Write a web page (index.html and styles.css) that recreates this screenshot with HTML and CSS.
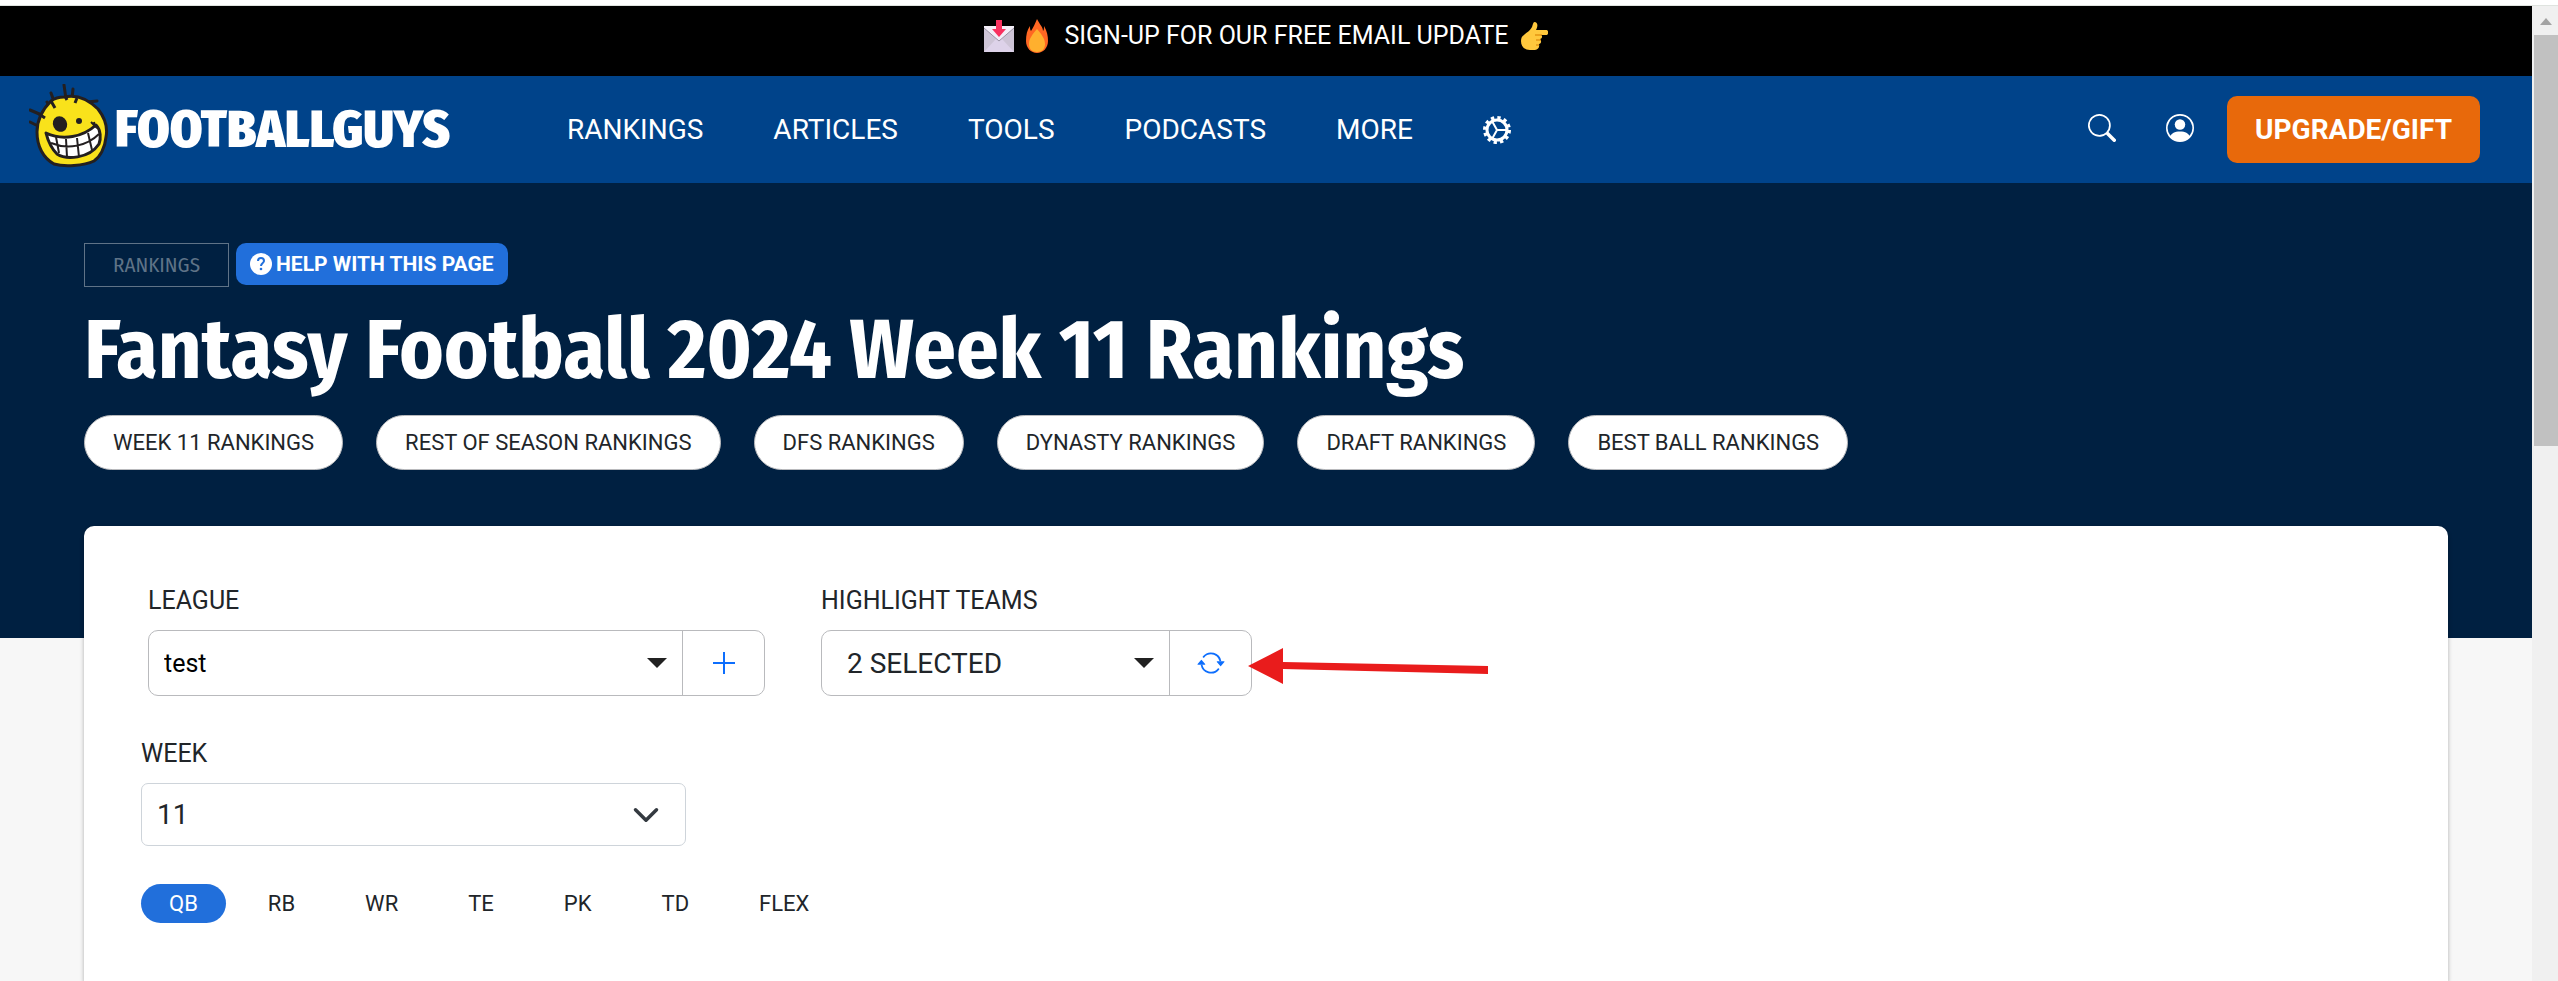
FILE: index.html
```
<!DOCTYPE html>
<html lang="en">
<head>
    <meta charset="UTF-8">
    <meta name="viewport" content="width=device-width, initial-scale=1.0">
    <title>Fantasy Football 2024 Week 11 Rankings</title>
    <link rel="stylesheet" href="styles.css">
</head>
<body>
    <div class="window-edge"></div>
    <div class="window">
        <div class="page">
            <a class="announcement" href="#">
                <svg width="30" height="32" viewBox="0 0 30 32" aria-hidden="true">
                    <rect x="0" y="6" width="30" height="26" fill="#e1d8ec"/>
                    <path d="M0 32 L12 19 H18 L30 32Z" fill="#ddd2e9"/>
                    <path d="M0 6 V32 L12 19Z M30 6 V32 L18 19Z" fill="#cdc4d6"/>
                    <path d="M0 6 H30 V8 L15 21 L0 8Z" fill="#f3eef8"/>
                    <path d="M0 8 L15 21 L30 8" fill="none" stroke="#9b93a4" stroke-width="1"/>
                    <path d="M12 0 H18 V9 H22 L15 17 L8 9 H12Z" fill="#f8315f"/>
                </svg>
                <svg class="flame" width="22" height="34" viewBox="0 0 22 34" aria-hidden="true">
                    <path d="M11 0 C14 6 17 8 17 12 C18 11 18 9 18 7 C21 12 22 17 22 22 C22 29 17 34 11 34 C5 34 0 29 0 22 C0 16 1 11 4 7 C4 9 4 11 5 12 C7 9 9 5 11 0Z" fill="#ff6723"/>
                    <path d="M11 10 C15 15 19 19 19 25 C19 30 16 33 11 33 C6 33 3 30 3 25 C3 19 7 15 11 10Z" fill="#ffb02e"/>
                </svg>
                <span>SIGN-UP FOR OUR FREE EMAIL UPDATE</span>
                <svg width="27" height="28" viewBox="0 0 27 28" aria-hidden="true">
                    <path d="M3 13 C6 10 9 9 11 5 C12 2 12 0 14 0 C17 1 17 4 15 8 H25 C28 8 28 13 25 13 H20 C22 14 21 17 19 17 C21 19 20 22 18 22 C19 25 17 28 14 28 H9 C3 28 0 24 0 19 C0 16 1 14 3 13Z" fill="#ffc83d"/>
                    <path d="M14 13 H21 M15 18 H20 M15 23 H18" stroke="#d67d00" stroke-width="1" fill="none"/>
                </svg>
            </a>

            <header class="navbar">
                <a class="logo" href="#">
                    <svg width="80" height="84" viewBox="0 0 80 84" aria-hidden="true">
                        <g fill="none" stroke="#231f20" stroke-width="3" stroke-linecap="round">
                            <path d="M1 26 L15 32 M1 38 L9 42 M22 9 L26 20 M35 1 L37 15 M44 5 L43 15 M68 17 L58 18 M18 18 L22 25 M51 15 L48 19"/>
                        </g>
                        <path d="M35 13 C48 10 60 16 69 25 C76 34 79 43 77 53 C76 64 71 73 65 77 C55 82 35 83 25 80 C14 74 8 62 8 48 C8 36 14 25 22 17 C26 14 30 13 35 13Z" fill="#f9e21b" stroke="#231f20" stroke-width="3"/>
                        <path d="M22 17 L26 24 M36 12 L38 16 M48 14 L46 19 M10 30 L16 34" stroke="#231f20" stroke-width="3"/>
                        <ellipse cx="31" cy="40" rx="7" ry="8" transform="rotate(-25 31 40)" fill="#231f20"/>
                        <circle cx="50" cy="37" r="3" fill="#231f20"/>
                        <path d="M17 49 C34 57 54 53 67 41 C72 46 72 55 70 60 C60 75 37 76 28 70 C22 64 19 57 17 49Z" fill="#fff" stroke="#231f20" stroke-width="3" stroke-linejoin="round"/>
                        <path d="M22 59 C39 66 58 62 70 50 M27 53 L30 69 M37 55 L38 73 M48 54 L50 73 M59 49 L63 66 M62 38 L66 42 L65 38" fill="none" stroke="#231f20" stroke-width="2"/>
                    </svg>
                    <span class="logo-text">FOOTBALLGUYS</span>
                </a>
                <nav class="main-nav">
                    <a href="#">RANKINGS</a>
                    <a href="#">ARTICLES</a>
                    <a href="#">TOOLS</a>
                    <a href="#">PODCASTS</a>
                    <a href="#">MORE</a>
                    <a href="#" aria-label="Settings">
                        <svg width="28" height="28" viewBox="0 0 28 28" fill="none" stroke="#fff" aria-hidden="true">
                            <circle cx="14" cy="14" r="12" stroke-width="4" stroke-dasharray="3.2 3.08"/>
                            <circle cx="14" cy="14" r="10" stroke-width="3"/>
                            <path d="M14 14 H24 M14 14 L9 5 M14 14 L9 23" stroke-width="2"/>
                        </svg>
                    </a>
                </nav>
                <div class="account">
                    <button type="button" class="icon-button" aria-label="Search">
                        <svg width="28" height="28" viewBox="0 0 16 16" fill="#fff" aria-hidden="true">
                            <path d="M11.742 10.344a6.5 6.5 0 1 0-1.397 1.398h-.001c.03.04.062.078.098.115l3.85 3.85a1 1 0 0 0 1.415-1.414l-3.85-3.85a1.007 1.007 0 0 0-.115-.1zM12 6.5a5.5 5.5 0 1 1-11 0 5.5 5.5 0 0 1 11 0z"/>
                        </svg>
                    </button>
                    <button type="button" class="icon-button" aria-label="Account">
                        <svg width="28" height="28" viewBox="0 0 16 16" fill="#fff" aria-hidden="true">
                            <path d="M11 6a3 3 0 1 1-6 0 3 3 0 0 1 6 0z"/>
                            <path fill-rule="evenodd" d="M0 8a8 8 0 1 1 16 0A8 8 0 0 1 0 8zm8-7a7 7 0 0 0-5.468 11.37C3.242 11.226 4.805 10 8 10s4.757 1.225 5.468 2.37A7 7 0 0 0 8 1z"/>
                        </svg>
                    </button>
                    <a class="upgrade" href="#">UPGRADE/GIFT</a>
                </div>
            </header>

            <section class="hero">
                <div class="tags">
                    <a class="category" href="#">RANKINGS</a>
                    <button type="button" class="help">
                        <svg width="22" height="22" viewBox="0 0 22 22" aria-hidden="true">
                            <circle cx="11" cy="11" r="11" fill="#fff"/>
                            <path d="M8 8 C8 4 14 4 14 8 C14 10 11 10 11 13" fill="none" stroke="#216fdb" stroke-width="2"/>
                            <circle cx="11" cy="16" r="1.3" fill="#216fdb"/>
                        </svg>
                        HELP WITH THIS PAGE
                    </button>
                </div>
                <h1>Fantasy Football 2024 Week 11 Rankings</h1>
                <nav class="pills">
                    <a href="#">WEEK 11 RANKINGS</a>
                    <a href="#">REST OF SEASON RANKINGS</a>
                    <a href="#">DFS RANKINGS</a>
                    <a href="#">DYNASTY RANKINGS</a>
                    <a href="#">DRAFT RANKINGS</a>
                    <a href="#">BEST BALL RANKINGS</a>
                </nav>
            </section>

            <main class="card">
                <div class="filters">
                    <div class="field league">
                        <label for="league">LEAGUE</label>
                        <div class="group">
                            <div class="select">
                                <select id="league">
                                    <option>test</option>
                                </select>
                                <svg class="caret" width="20" height="10" viewBox="0 0 20 10" aria-hidden="true"><path d="M0 0 H20 L10 10Z" fill="#212121"/></svg>
                            </div>
                            <button type="button" class="addon" aria-label="Add league">
                                <svg width="22" height="22" viewBox="0 0 22 22" aria-hidden="true"><path d="M11 0 V22 M0 11 H22" stroke="#0d6efd" stroke-width="2"/></svg>
                            </button>
                        </div>
                    </div>
                    <div class="field teams">
                        <label for="teams">HIGHLIGHT TEAMS</label>
                        <div class="group">
                            <button type="button" class="dropdown" id="teams">
                                2 SELECTED
                                <svg width="20" height="10" viewBox="0 0 20 10" aria-hidden="true"><path d="M0 0 H20 L10 10Z" fill="#212121"/></svg>
                            </button>
                            <button type="button" class="addon" aria-label="Refresh teams">
                                <svg width="28" height="28" viewBox="0 0 16 16" fill="#0d6efd" aria-hidden="true">
                                    <path d="M11.534 7h3.932a.25.25 0 0 1 .192.41l-1.966 2.36a.25.25 0 0 1-.384 0l-1.966-2.36a.25.25 0 0 1 .192-.41zm-11 2h3.932a.25.25 0 0 0 .192-.41L2.692 6.23a.25.25 0 0 0-.384 0L.342 8.59A.25.25 0 0 0 .534 9z"/>
                                    <path fill-rule="evenodd" d="M8 3c-1.552 0-2.94.707-3.857 1.818a.5.5 0 1 1-.771-.636A6.002 6.002 0 0 1 13.917 7H12.9A5.002 5.002 0 0 0 8 3zM3.1 9a5.002 5.002 0 0 0 8.757 2.182.5.5 0 1 1 .771.636A6.002 6.002 0 0 1 2.083 9H3.1z"/>
                                </svg>
                            </button>
                            <svg class="pointer" width="240" height="36" viewBox="0 0 240 36" aria-hidden="true">
                                <path d="M0 18 L35 0 V14 L240 18 V26 L35 21 V36Z" fill="#e91c1c"/>
                            </svg>
                        </div>
                    </div>
                </div>

                <div class="field week">
                    <label for="week">WEEK</label>
                    <div class="select">
                        <select id="week">
                            <option>11</option>
                        </select>
                        <svg class="chevron" width="28" height="28" viewBox="0 0 16 16" aria-hidden="true"><path d="M2 5l6 6 6-6" fill="none" stroke="#343a40" stroke-width="2" stroke-linecap="round" stroke-linejoin="round"/></svg>
                    </div>
                </div>

                <div class="positions">
                    <button type="button" class="active">QB</button>
                    <button type="button">RB</button>
                    <button type="button">WR</button>
                    <button type="button">TE</button>
                    <button type="button">PK</button>
                    <button type="button">TD</button>
                    <button type="button">FLEX</button>
                </div>
            </main>
        </div>

        <div class="scrollbar" aria-hidden="true">
            <svg width="12" height="7" viewBox="0 0 12 7"><path d="M0 7 L6 0 L12 7Z" fill="#a3a3a3"/></svg>
            <div class="thumb"></div>
        </div>
    </div>
</body>
</html>
```
FILE: styles.css
```
* {
    box-sizing: border-box;
}

body {
    font-family: Roboto, Arial, sans-serif;
    font-size: 25px;
    margin: 0;
    background-color: #fff;
    color: #212529;
    display: flex;
    flex-direction: column;
    min-height: 100vh;
}

a {
    color: inherit;
    text-decoration: none;
}

button,
select {
    font-family: inherit;
    color: inherit;
    background: none;
    border: none;
    margin: 0;
    padding: 0;
    cursor: pointer;
}

svg {
    display: block;
    flex-shrink: 0;
}

.window-edge {
    height: 6px;
    border-bottom: 1px solid #dfe3df;
}

.window {
    display: flex;
    flex: 1;
}

.page {
    display: flex;
    flex-direction: column;
    flex: 1;
    background-color: #f7f7f7;
}

/* top bar */
.announcement {
    display: flex;
    justify-content: center;
    align-items: center;
    gap: 12px;
    padding: 13px 0 23px;
    line-height: 34px;
    background-color: #000;
    color: #fff;
}

.flame {
    margin-right: 4px;
}

.navbar {
    display: flex;
    align-items: center;
    padding: 0 52px 0 29px;
    min-height: 107px;
    background-color: #00438a;
    color: #fff;
}

.logo {
    display: flex;
    align-items: center;
    gap: 6px;
    width: 416px;
}

.logo svg {
    margin-bottom: 8px;
}

.logo-text {
    font-family: "Fira Sans Condensed", "Liberation Sans", sans-serif;
    font-size: 52px;
    font-weight: 900;
}

.main-nav {
    display: flex;
    align-items: center;
    gap: 70px;
    margin-left: 122px;
    font-size: 28px;
}

.account {
    display: flex;
    align-items: center;
    margin-left: auto;
}

.icon-button {
    margin-right: 50px;
    padding-bottom: 3px;
}

.icon-button + .icon-button {
    margin-right: 33px;
}

.upgrade {
    padding: 0 28px;
    line-height: 67px;
    border-radius: 10px;
    background-color: #e8690b;
    font-size: 28px;
    font-weight: bold;
}

/* hero */
.hero {
    padding: 60px 84px 168px;
    background-color: #002041;
    color: #fff;
}

.tags {
    display: flex;
    align-items: flex-start;
    gap: 7px;
}

.category {
    padding: 0 28px;
    line-height: 42px;
    border: 1px solid #5f7387;
    color: #5f7387;
    font-family: "Fira Sans Condensed", Roboto, sans-serif;
    font-size: 21px;
}

.help {
    display: flex;
    align-items: center;
    gap: 4px;
    height: 42px;
    padding: 0 14px;
    border-radius: 10px;
    background-color: #216fdb;
    color: #fff;
    font-size: 21px;
    font-weight: bold;
}

h1 {
    margin: 15px 0 17px;
    font-family: "Fira Sans Condensed", "Open Sans", sans-serif;
    font-size: 84px;
    line-height: 96px;
    font-weight: bold;
}

.pills {
    display: flex;
    flex-wrap: wrap;
    gap: 33px;
}

.pills a {
    padding: 0 28px;
    line-height: 53px;
    border: 1px solid #b9babd;
    border-radius: 28px;
    background-color: #fff;
    color: #212529;
    font-size: 22px;
}

/* filters */
.card {
    flex: 1;
    margin: -112px 84px 0;
    padding: 57px 57px 40px;
    border-radius: 10px 10px 0 0;
    background-color: #fff;
    box-shadow: 0 2px 4px rgba(0, 0, 0, 0.3);
}

.filters {
    display: flex;
    gap: 56px;
    padding: 0 7px;
}

.field label {
    display: block;
    line-height: 36px;
    margin-bottom: 11px;
}

.league {
    width: 617px;
}

.teams {
    width: 431px;
}

.group {
    position: relative;
    display: flex;
    height: 66px;
    border: 1px solid #b9babd;
    border-radius: 10px;
}

.select {
    display: grid;
    flex: 1;
    align-items: center;
}

.select select,
.select svg {
    grid-area: 1 / 1;
}

.select select {
    appearance: none;
    height: 100%;
    padding-left: 15px;
}

.select svg {
    justify-self: end;
    pointer-events: none;
}

.league select {
    color: #000;
    font-size: 25px;
}

.caret {
    margin-right: 15px;
}

.addon {
    display: flex;
    justify-content: center;
    align-items: center;
    width: 82px;
    border-left: 1px solid #b9babd;
}

.dropdown {
    display: flex;
    flex: 1;
    justify-content: space-between;
    align-items: center;
    padding: 0 15px 0 25px;
    font-size: 28px;
}

.pointer {
    position: absolute;
    top: 17px;
    left: calc(100% - 3px);
}

.week {
    width: 545px;
    margin-top: 40px;
}

.week .select {
    height: 63px;
    border: 1px solid #ced4da;
    border-radius: 7px;
}

.week select {
    font-size: 28px;
}

.chevron {
    margin-right: 25px;
}

.positions {
    display: flex;
    gap: 14px;
    margin-top: 38px;
}

.positions button {
    padding: 0 28px;
    line-height: 39px;
    border-radius: 20px;
    font-size: 22px;
}

.positions .active {
    background-color: #216fdb;
    color: #fff;
}

/* browser scrollbar */
.scrollbar {
    width: 26px;
    padding: 12px 0 0 2px;
    background-color: #f0f0f0;
}

.scrollbar svg {
    margin: 0 auto 10px;
}

.thumb {
    height: 411px;
    background-color: #c1c1c1;
}
```
